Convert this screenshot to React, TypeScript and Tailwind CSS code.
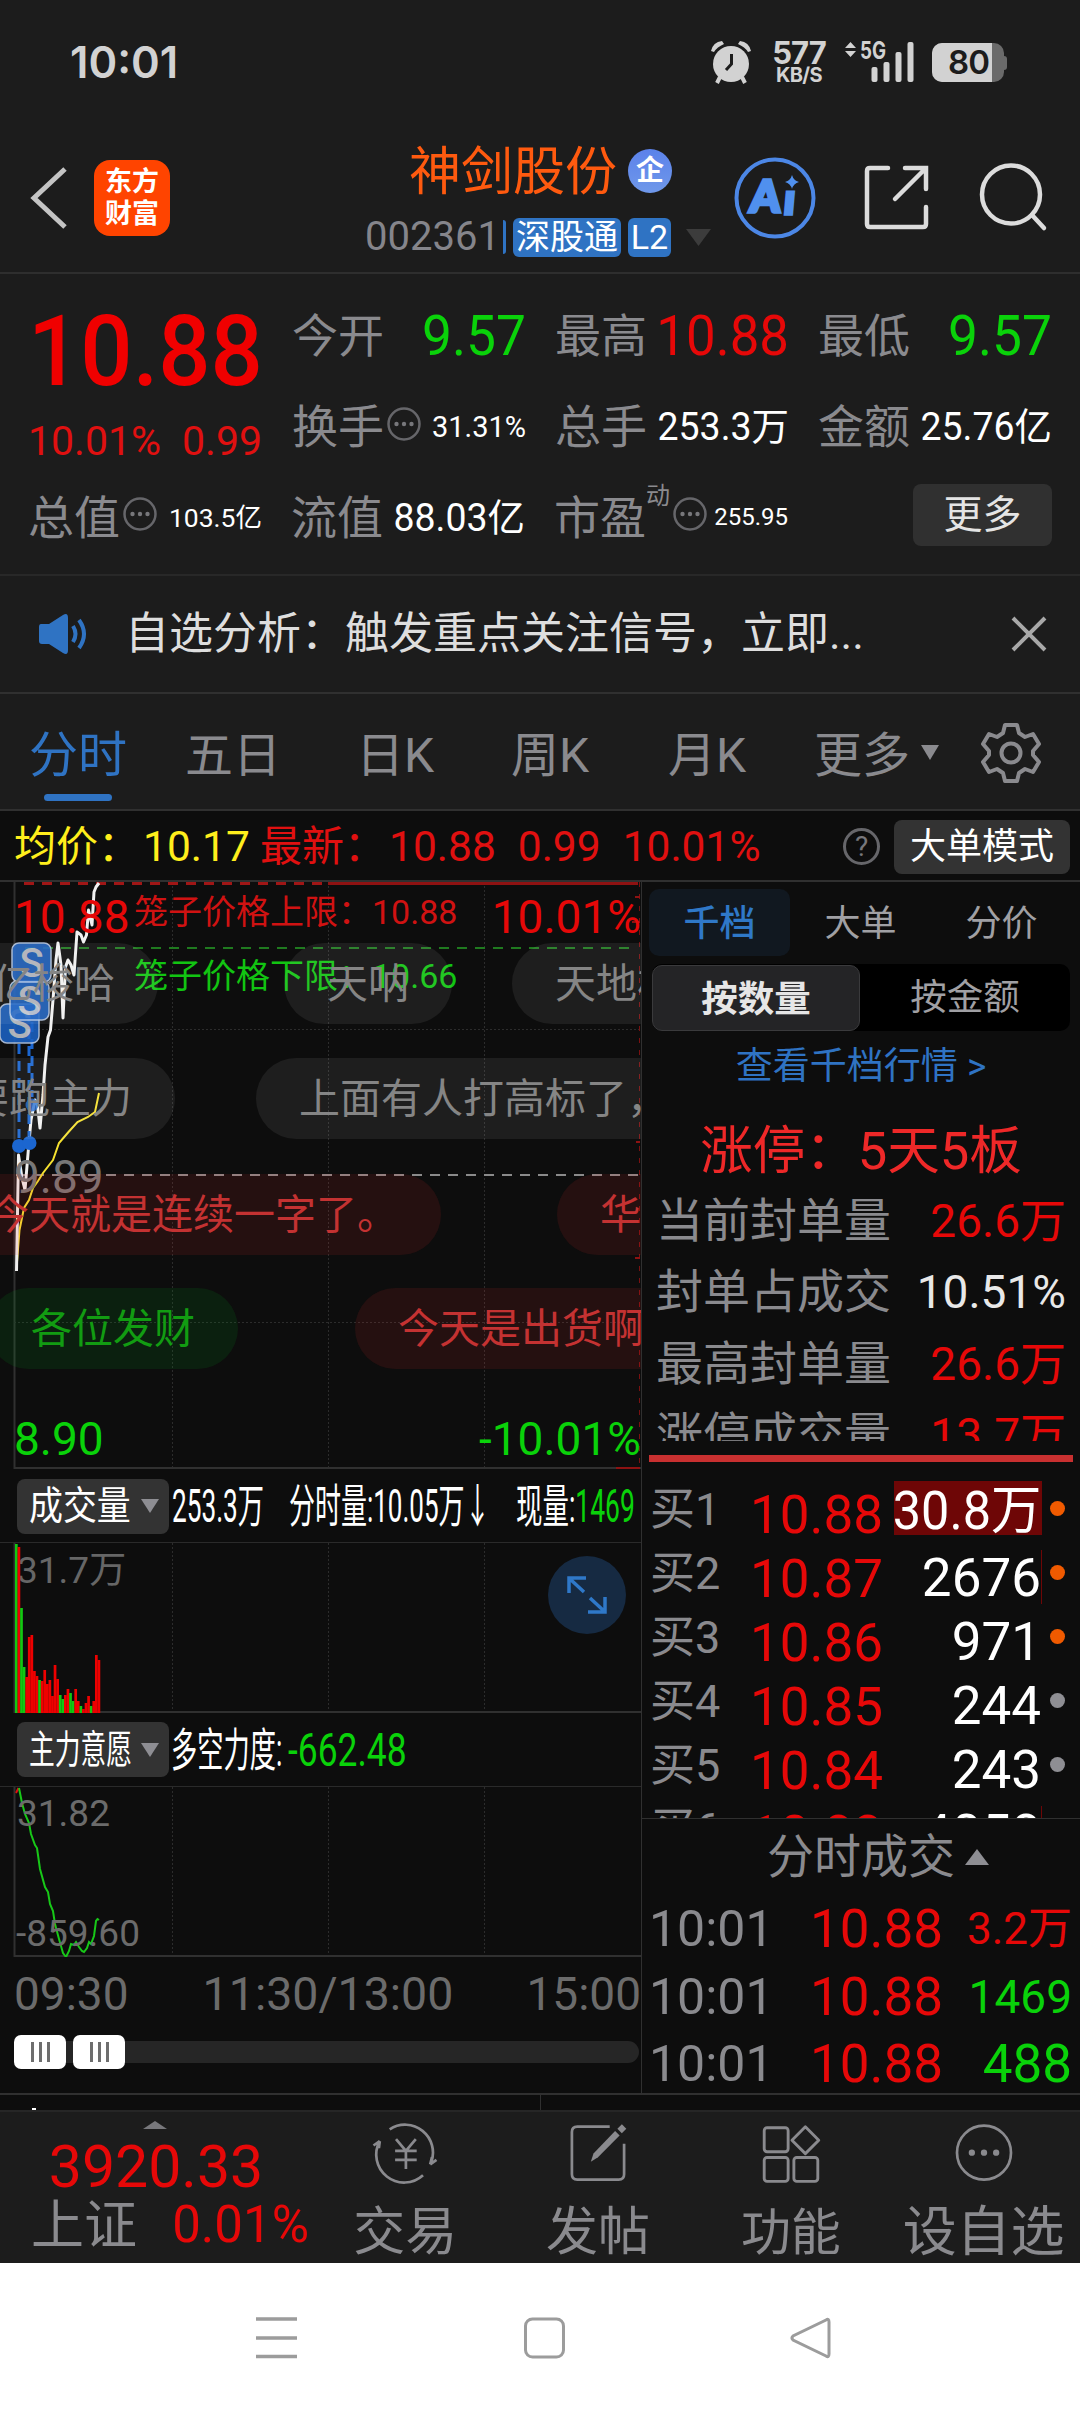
import type { ReactNode } from 'react';
import clsx from 'clsx';

const GRID_X = [172, 328, 484];

// [height, direction] per minute, 'u' = red, 'd' = green
const VOLUME: [number, 'u' | 'd'][] = [
  [169, 'd'], [166, 'u'], [105, 'd'], [46, 'd'], [36, 'u'], [76, 'u'], [78, 'u'], [42, 'u'], [37, 'u'],
  [33, 'd'], [32, 'u'], [43, 'u'], [29, 'u'], [33, 'u'], [17, 'u'], [48, 'u'], [34, 'u'], [18, 'd'],
  [14, 'd'], [18, 'u'], [24, 'u'], [20, 'd'], [12, 'd'], [24, 'u'], [12, 'u'], [7, 'd'], [4, 'u'],
  [10, 'u'], [17, 'u'], [7, 'd'], [12, 'u'], [58, 'u'], [53, 'u'],
];

const PRICE_LINE =
  '16.5,389 18.5,273 22,296 25,308 29,260 31,238 35,218 37.5,223 40,246 43,213 45,183 48,155 50.5,148 53,118 56,78 58,61 61,83 63,136 65.5,85 68,78 71,83 74,93 77,50 81,53 83.5,60 86.5,53 88.5,28 92,43 94,10 96,5 99,1';
const AVG_LINE =
  '17,380 19.5,348 24,326 29,318 33,306 38,299 43,291 53,278 59,261 68.5,250 77.5,240 88,235 95,230 99,211';
const FORCE_LINE =
  '19,1 22,16 25,27 29,36 31,47 35,58 37,61 40,82 45,100 48,105 50,117 53,124 55,137 59,152 61,159 63,166 66,170 69,164 71,157 74,158 76,155 79,160 82,164 84,165 87,161 89,155 91,157 94,149 96,134 97.5,132 99,133';

const BIDS = [
  { label: '买1', price: '10.88', vol: '30.8万', dot: 'bg-[#f05a00]' },
  { label: '买2', price: '10.87', vol: '2676', dot: 'bg-[#f05a00]' },
  { label: '买3', price: '10.86', vol: '971', dot: 'bg-[#f05a00]' },
  { label: '买4', price: '10.85', vol: '244', dot: 'bg-[#8e8e93]' },
  { label: '买5', price: '10.84', vol: '243', dot: 'bg-[#8e8e93]' },
  { label: '买6', price: '10.83', vol: '4058', dot: '' },
];

const SEAL_ROWS = [
  { label: '当前封单量', value: '26.6万', color: 'text-[#e60808]' },
  { label: '封单占成交', value: '10.51%', color: 'text-[#e8e8e8]' },
  { label: '最高封单量', value: '26.6万', color: 'text-[#e60808]' },
  { label: '涨停成交量', value: '13.7万', color: 'text-[#e60808]' },
];

function StatusBar() {
  return (
    <div className="flex h-[123px] items-start pl-[70px]">
      <span className="mt-[38px] w-[641px] font-['Inter'] text-[44px] leading-[48px] font-semibold text-[#d2d2d2]">
        <span className="inline-block origin-left scale-x-[0.99]">10:01</span>
      </span>
      <svg className="mt-[40px] shrink-0" width="40" height="44" viewBox="0 0 40 44" fill="#d2d2d2">
        <circle cx="20" cy="24" r="18" />
        <path d="M0 11 Q2 2 11 1 L13 4 Q6 7 3 12Z M40 11 Q38 2 29 1 L27 4 Q34 7 37 12Z" />
        <path d="M9 37 L6 43 M31 37 L34 43" stroke="#d2d2d2" strokeWidth="4" />
        <path d="M20.500 14 V24 L15 30" stroke="#1c1c1c" strokeWidth="3" fill="none" />
      </svg>
      <div className="mt-[39px] ml-[20px] flex w-[56px] flex-col items-center text-[#d2d2d2]">
        <span className="font-['Inter'] text-[31px] leading-[28px] font-bold tracking-[-1px]">577</span>
        <span className="font-['Inter'] text-[20px] leading-[17px] font-bold tracking-[-0.6px]">KB/S</span>
      </div>
      <svg className="mt-[40px] ml-[17px] shrink-0" width="72" height="44" viewBox="0 0 72 44" fill="#d2d2d2">
        <path d="M1 8 L6.500 2 L12 8Z M1 11 L6.500 17 L12 11Z" />
        <text x="16" y="18.500" fontFamily="Inter" fontWeight="700" fontSize="24" textLength="26" lengthAdjust="spacingAndGlyphs">5G</text>
        <rect x="27.500" y="27" width="6" height="15" rx="2" />
        <rect x="39.500" y="22" width="6" height="20" rx="2" />
        <rect x="51.500" y="12" width="6" height="30" rx="2" />
        <rect x="63.500" y="2" width="6" height="40" rx="2" />
      </svg>
      <div className="mt-[43px] ml-[16px] flex items-center">
        <div className="flex h-[39px] w-[72px] overflow-hidden rounded-[10px] bg-[#6a6a6a]">
          <div className="flex w-[60px] items-center justify-end bg-[#d2d2d2] pr-[3px] font-['Inter'] text-[33px] font-semibold tracking-[-1px] text-[#1c1c1c]">
            80
          </div>
        </div>
        <div className="h-[14px] w-[3px] rounded-r bg-[#6a6a6a]" />
      </div>
    </div>
  );
}

function NavBar() {
  return (
    <div className="flex h-[151px] items-start border-b-2 border-[#2e2e2e]">
      <svg className="mt-[43px] ml-[29px]" width="40" height="64" viewBox="0 0 40 64" fill="none" stroke="#c4c4c4" strokeWidth="5">
        <path d="M36 3 L5 32 L36 61" />
      </svg>
      <div className="mt-[37px] ml-[25px] flex h-[76px] w-[76px] flex-col items-center justify-center rounded-[16px] bg-[#ff4400] text-[27px] leading-[32px] font-bold text-white">
        <span>东方</span>
        <span>财富</span>
      </div>
      <div className="mt-[19px] ml-[195px] w-[347px]">
        <div className="ml-[44px] flex h-[58px] items-center text-[52px] leading-[56px] text-[#ff5a0f]">
          <span className="mt-[4px] w-[219px]">神剑股份</span>
          <span className="flex size-[44px] items-center justify-center rounded-full bg-[linear-gradient(180deg,#5b82ea,#6f98ea)] text-[28px] leading-[28px] font-bold text-white">
            企
          </span>
        </div>
        <div className="mt-[17px] flex h-[40px] items-center">
          <span className="w-[138px] text-[40px] leading-[40px] text-[#85858b]">002361</span>
          <span className="h-[34px] w-[3px] rounded-r-[3px] bg-[#2f73c3]" />
          <span className="ml-[7px] flex h-[39px] w-[108px] items-center justify-center rounded-[6px] bg-[#2f73c3] text-[34px] leading-[34px] text-white">深股通</span>
          <span className="ml-[7px] flex h-[39px] w-[43px] items-center justify-center rounded-[6px] bg-[#2f73c3] text-[34px] leading-[34px] text-white">L2</span>
          <svg className="ml-[15px]" width="25" height="17" viewBox="0 0 25 17" fill="#3c3c3c">
            <path d="M0 0 H25 L12.500 17Z" />
          </svg>
        </div>
      </div>
      <svg className="mt-[34px] ml-[22px]" width="82" height="82" viewBox="0 0 82 82" fill="#5090ee">
        <circle cx="41" cy="41" r="38.500" fill="none" stroke="#4c87e6" strokeWidth="4" />
        <g transform="skewX(-5)" stroke="#5090ee" strokeWidth="3.500" fontFamily="Lato, sans-serif" fontWeight="900">
          <text x="20" y="55" fontSize="44" textLength="30" lengthAdjust="spacingAndGlyphs">A</text>
          <text x="54" y="57" fontSize="42">ı</text>
        </g>
        <path d="M58 18 Q59.500 23.500 65 25 Q59.500 26.500 58 32 Q56.500 26.500 51 25 Q56.500 23.500 58 18Z" />
      </svg>
      <svg className="mt-[40px] ml-[46px]" width="70" height="70" viewBox="0 0 70 70" fill="none" stroke="#dcdcdc" strokeWidth="4.500" strokeLinecap="round">
        <path d="M26 5 H8 Q5 5 5 8 V61 Q5 64 8 64 H61 Q64 64 64 61 V44" />
        <path d="M43 5 H64 V26 M63 6 L33 36" />
      </svg>
      <svg className="mt-[39px] ml-[46px]" width="72" height="72" viewBox="0 0 72 72" fill="none" stroke="#dcdcdc" strokeWidth="4.500" strokeLinecap="round">
        <circle cx="33" cy="32.500" r="29" />
        <path d="M54 53 L66 66" />
      </svg>
    </div>
  );
}

function MoreDots({ className }: { className?: string }) {
  return (
    <svg className={clsx('shrink-0', className)} width="34" height="34" viewBox="0 0 34 34">
      <circle cx="17" cy="17" r="15.500" fill="none" stroke="#66666a" strokeWidth="2.500" />
      <circle cx="9.500" cy="17" r="2.200" fill="#77777b" />
      <circle cx="17" cy="17" r="2.200" fill="#77777b" />
      <circle cx="24.500" cy="17" r="2.200" fill="#77777b" />
    </svg>
  );
}

function Stat({ label, icon, children, className }: { label: string; icon?: ReactNode; children: ReactNode; className?: string }) {
  return (
    <div className="flex h-[60px] w-[234px] items-center">
      <span className="shrink-0 text-[46px] leading-[60px] text-[#8a8a8e]">{label}</span>
      {icon}
      <span className={clsx('flex flex-1 origin-right justify-end leading-[60px] whitespace-nowrap', className)}>{children}</span>
    </div>
  );
}

function QuotePanel() {
  return (
    <div className="h-[302px] border-b-2 border-[#282828] pt-[32px] pl-[28px]">
      <div className="flex h-[152px] gap-[30px]">
        <div className="flex w-[234px] flex-col">
          <span className="mt-[-5px] h-[100px] origin-left scale-x-[0.93] text-[99px] leading-[100px] font-medium text-[#f00000]">10.88</span>
          <div className="mt-[15px] flex h-[52px] items-center justify-between text-[#e01010]">
            <span className="text-[41px]">10.01%</span>
            <span className="text-[41px]">0.99</span>
          </div>
        </div>
        <div className="flex flex-col gap-[31px]">
          <div className="flex gap-[29px]">
            <Stat label="今开" className="scale-x-[0.97] text-[55px] text-[#0ad20a]">9.57</Stat>
            <Stat label="最高" className="scale-x-[0.96] text-[55px] text-[#e60808]">10.88</Stat>
            <Stat label="最低" className="scale-x-[0.97] text-[55px] text-[#0ad20a]">9.57</Stat>
          </div>
          <div className="flex gap-[29px]">
            <Stat label="换手" icon={<MoreDots className="mb-[7px] ml-[3px]" />} className="text-[29px] text-white">31.31%</Stat>
            <Stat label="总手" className="scale-x-[0.985] text-[38px] text-white">253.3万</Stat>
            <Stat label="金额" className="scale-x-[0.985] text-[38px] text-white">25.76亿</Stat>
          </div>
        </div>
      </div>
      <div className="mt-[30px] flex gap-[29px]">
        <Stat label="总值" icon={<MoreDots className="mb-[9px] ml-[3px]" />} className="text-[26.500px] text-white">103.5亿</Stat>
        <Stat label="流值" className="scale-x-[0.985] text-[38px] text-white">88.03亿</Stat>
        <Stat
          label="市盈"
          icon={
            <>
              <span className="mb-[44px] text-[24px] leading-[24px] text-[#8a8a8e]">动</span>
              <MoreDots className="mb-[9px] ml-[3px]" />
            </>
          }
          className="mb-[2px] text-[24px] text-white"
        >
          255.95
        </Stat>
        <div className="flex w-[235px] justify-end">
          <span className="mt-[-4px] flex h-[62px] w-[139px] items-center justify-center rounded-[8px] bg-[#303030] text-[39px] text-[#e4e4e4]">更多</span>
        </div>
      </div>
    </div>
  );
}

function NoticeBar() {
  return (
    <div className="flex h-[118px] items-center border-b-2 border-[#303030] pl-[38px]">
      <svg width="52" height="44" viewBox="0 0 52 44">
        <path d="M3 12 Q1 12 1 15 V29 Q1 32 4 32 H11 L25 41 Q30 44 30 38 V6 Q30 0 25 3 L11 12Z" fill="#2f73c3" />
        <path d="M35 14 Q40 22 35 30 M41 8 Q51 22 41 36" fill="none" stroke="#2f73c3" strokeWidth="4" />
      </svg>
      <span className="ml-[35px] text-[44px] leading-[60px] text-[#dedede]">自选分析：触发重点关注信号，立即...</span>
      <svg className="mr-[33px] ml-auto" width="36" height="36" viewBox="0 0 36 36" stroke="#a8a8a8" strokeWidth="4">
        <path d="M2 2 L34 34 M34 2 L2 34" />
      </svg>
    </div>
  );
}

function PeriodTabs() {
  return (
    <div className="flex h-[117px] items-start border-b-2 border-[#303030] pl-[29px] text-[48px] leading-[60px] text-[#8a8a8e]">
      <div className="mt-[32px] flex w-[98px] flex-col items-center text-[#2f73c3]">
        <span className="text-[49px]">分时</span>
        <span className="mt-[8px] h-[7px] w-[68px] rounded-full bg-[#2f73c3]" />
      </div>
      <span className="mt-[32px] ml-[58px] w-[96px]">五日</span>
      <span className="mt-[32px] ml-[75px] w-[80px]">日K</span>
      <span className="mt-[32px] ml-[75px] w-[80px]">周K</span>
      <span className="mt-[32px] ml-[77px] w-[80px]">月K</span>
      <span className="mt-[32px] ml-[66px]">更多</span>
      <svg className="mt-[51px] ml-[11px]" width="18" height="15" viewBox="0 0 18 15" fill="#8a8a8e">
        <path d="M0 0 H18 L9 15Z" />
      </svg>
      <svg className="mt-[28px] ml-[41px]" width="62" height="62" viewBox="0 0 62 62" fill="none" stroke="#8a8a8e" strokeWidth="4">
        <path d="M25 3 H37 L39 11 L45 15 L53 12 L59 22 L53 29 V33 L59 40 L53 50 L45 47 L39 51 L37 59 H25 L23 51 L17 47 L9 50 L3 40 L9 33 V29 L3 22 L9 12 L17 15 L23 11Z" strokeLinejoin="round" />
        <circle cx="31" cy="31" r="9.500" />
      </svg>
    </div>
  );
}

function PriceSummary() {
  return (
    <div className="flex h-[71px] items-center border-b-2 border-[#303030] bg-[#0d0d0d] pt-[2px] pl-[14px] text-[42px] leading-[60px] whitespace-pre">
      <span className="w-[246px] text-[#ffee1c]">均价：<span className="ml-[3px] text-[42.500px]">10.17</span></span>
      <span className="w-[583px] text-[#e01010]">最新：<span className="ml-[3px] text-[42.500px]">10.88</span><span className="ml-[22px] text-[42.500px]">0.99</span><span className="ml-[22px] text-[42.500px]">10.01%</span></span>
      <span className="flex size-[37px] items-center justify-center rounded-full border-[3px] border-[#66666a] text-[28px] leading-[28px] text-[#77777b]">?</span>
      <span className="ml-[14px] flex h-[54px] w-[176px] items-center justify-center rounded-[8px] bg-[#333333] text-[36px] text-white">大单模式</span>
    </div>
  );
}

// Comment bubbles drifting over the price chart
function Bubble({ tone, className, children }: { tone: 'gray' | 'red' | 'green'; className: string; children: string }) {
  return (
    <span
      className={clsx(
        'absolute flex h-[81px] items-center rounded-full px-[43px] text-[41px] leading-[60px] whitespace-nowrap',
        tone === 'gray' && 'bg-white/[0.07] text-[#858585]',
        tone === 'red' && 'bg-[#f03030]/[0.11] text-[#c43232]',
        tone === 'green' && 'bg-[#00b020]/[0.12] text-[#129c12]',
        className,
      )}
    >
      {children}
    </span>
  );
}

function SellMark({ x, y }: { x: number; y: number }) {
  return (
    <g opacity="0.88">
      <rect x={x} y={y} width="39" height="39" rx="7" fill="#1b62c4" stroke="#b8cbe8" strokeWidth="1.500" />
      <text x={x + 19.500} y={y + 34} textAnchor="middle" fontFamily="Roboto" fontWeight="500" fontSize="40" fill="#c4c8d0">S</text>
    </g>
  );
}

function Grid({ h }: { h: number }) {
  return (
    <>
      {GRID_X.map(x => (
        <line key={x} x1={x + 0.5} x2={x + 0.5} y1="0" y2={h} stroke="#2c2c2c" strokeDasharray="2 2" />
      ))}
      <path d={`M14.500 0 V${h - 1} H641`} fill="none" stroke="#303030" strokeWidth="2" />
    </>
  );
}

function PriceChart() {
  return (
    <div className="relative h-[587px] overflow-hidden leading-[60px]">
      <svg className="block" width="641" height="587" viewBox="0 0 641 587">
        <Grid h={587} />
        <path d="M14 147.500 H641 M14 440.500 H641" stroke="#2c2c2c" strokeDasharray="2 2" />
        <path d="M24 1.500 H328" stroke="#a01616" strokeWidth="3" strokeDasharray="10 8" />
        <path d="M328 1.500 H638" stroke="#8e1212" strokeWidth="3" />
        <path d="M25 66 H630" stroke="#1f7a1f" strokeWidth="2" strokeDasharray="10 8" />
        <path d="M16 293 H641" stroke="#8a8a8a" strokeWidth="2" strokeDasharray="10 8" />
        <path d="M639.500 0 V586" stroke="#7a1010" strokeDasharray="5 7" />
        <path d="M635 15 H640 M632 40 H640 M636 260 H640 M635 376 H640 M616 586 H640" stroke="#8e1212" strokeWidth="2" />
        <polyline points={AVG_LINE} fill="none" stroke="#f5e130" strokeWidth="2" />
        <polyline points={PRICE_LINE} fill="none" stroke="#f0f0f0" strokeWidth="3" strokeLinejoin="round" />
        <path d="M19 162 V256 M29 130 V254 M32 140 V215" stroke="#1b66d0" strokeWidth="3" strokeDasharray="10 7" />
        <circle cx="32" cy="223" r="6.500" fill="#1b66d0" opacity="0.8" />
        <circle cx="19" cy="264" r="7" fill="#1b66d0" />
        <circle cx="29.500" cy="261" r="7" fill="#1b66d0" />
        <SellMark x={0} y={122} />
        <SellMark x={10} y={99} />
        <SellMark x={12} y={61} />
      </svg>
      <span className="absolute top-[5px] left-[14px] text-[46px] text-[#e60808]">10.88</span>
      <span className="absolute top-[5px] right-0 text-[46px] text-[#e60808]">10.01%</span>
      <span className="absolute top-[265px] left-[14px] text-[46px] text-[#777777]">9.89</span>
      <span className="absolute top-[527px] left-[14px] text-[46px] text-[#0ad20a]">8.90</span>
      <span className="absolute top-[527px] right-0 text-[46px] text-[#0ad20a]">-10.01%</span>
      <span className="absolute top-0 left-[134px] text-[34px] whitespace-nowrap text-[#d01212]">笼子价格上限：10.88</span>
      <span className="absolute top-[64px] left-[134px] text-[34px] whitespace-nowrap text-[#12c412]">笼子价格下限：10.66</span>
      <Bubble tone="gray" className="top-[61px] right-[483px]">亿梭哈</Bubble>
      <Bubble tone="gray" className="top-[61px] left-[284px]">天呐</Bubble>
      <Bubble tone="gray" className="top-[61px] left-[512px]">天地板</Bubble>
      <Bubble tone="gray" className="top-[176px] right-[466px]">要跑主力</Bubble>
      <Bubble tone="gray" className="top-[176px] left-[256px]">上面有人打高标了，</Bubble>
      <Bubble tone="red" className="top-[292px] right-[200px]">今天就是连续一字了。</Bubble>
      <Bubble tone="red" className="top-[292px] left-[557px]">华</Bubble>
      <Bubble tone="green" className="top-[406px] left-[-12px]">各位发财</Bubble>
      <Bubble tone="red" className="top-[406px] left-[355px]">今天是出货啊</Bubble>
    </div>
  );
}

function IndicatorSelect({ children, squeeze }: { children: string; squeeze: string }) {
  return (
    <div className="ml-[17px] flex h-[55px] w-[152px] shrink-0 items-center rounded-[8px] bg-[#333333] pl-[12px]">
      <span className="w-[112px] text-white">
        <span className={clsx('block origin-left text-[39px] whitespace-nowrap', squeeze)}>{children}</span>
      </span>
      <svg width="18" height="14" viewBox="0 0 18 14" fill="#8e8e93">
        <path d="M0 0 H18 L9 14Z" />
      </svg>
    </div>
  );
}

function ChartColumn() {
  return (
    <div className="w-[641px] overflow-hidden">
      <PriceChart />
      <div className="flex h-[73px] items-center pt-px text-[46px] leading-[60px] whitespace-nowrap text-white">
        <IndicatorSelect squeeze="scale-x-[0.87]">成交量</IndicatorSelect>
        <div className="ml-[3px] w-[117px]"><span className="block origin-left scale-x-[0.57]">253.3万</span></div>
        <div className="w-[227px]"><span className="block origin-left scale-x-[0.565]">分时量:10.05万↓</span></div>
        <div className="w-[124px]"><span className="block origin-left scale-x-[0.575]">现量:<span className="text-[#0ad20a]">1469</span></span></div>
      </div>
      <div className="relative h-[171px] border-t border-[#2a2a2a]">
        <svg className="block" width="641" height="170" viewBox="0 0 641 170">
          <Grid h={170} />
        </svg>
        <span className="absolute top-0 left-[17px] text-[37px] leading-[56px] text-[#666666]">31.7万</span>
        <svg className="absolute top-0 left-0" width="140" height="170" viewBox="0 0 140 170">
          {VOLUME.map(([h, dir], i) => (
            <rect key={i} x={15 + i * 2.58} y={170 - h} width="2.700" height={h} fill={dir === 'u' ? '#ee0000' : '#12c812'} />
          ))}
        </svg>
        <span className="absolute top-[13px] left-[548px] flex size-[78px] items-center justify-center rounded-full bg-[#162a42]">
          <svg width="40" height="40" viewBox="0 0 40 40" fill="none" stroke="#2f78c8" strokeWidth="3.500">
            <path d="M2 18 V3 H19 M3 4 L17 17 M38 22 V37 H21 M37 36 L23 23" />
          </svg>
        </span>
      </div>
      <div className="flex h-[73px] items-center text-[46px] leading-[60px] whitespace-nowrap text-white">
        <IndicatorSelect squeeze="scale-x-[0.66]">主力意愿</IndicatorSelect>
        <div className="ml-[2px] w-[117px]"><span className="block origin-left scale-x-[0.57]">多空力度:</span></div>
        <span className="block origin-left scale-x-[0.77] text-[#0ad20a]">-662.48</span>
      </div>
      <div className="relative h-[170px] border-t border-[#2a2a2a]">
        <svg className="block" width="641" height="170" viewBox="0 0 641 170">
          <Grid h={170} />
          <path d="M16 6 L18.500 1" stroke="#e01010" strokeWidth="2" />
          <polyline points={FORCE_LINE} fill="none" stroke="#18c818" strokeWidth="2" />
        </svg>
        <span className="absolute top-px left-[17px] text-[37px] leading-[52px] text-[#6b6b6b]">31.82</span>
        <span className="absolute top-[121px] left-[16px] text-[37px] leading-[52px] text-[#6b6b6b]">-859.60</span>
      </div>
      <div className="flex h-[79px] items-center justify-between pl-[14px] text-[46px] leading-[76px] text-[#6b6b6b]">
        <span className="mb-[3px]">09:30</span>
        <span className="mb-[3px] ml-px text-[46.500px]">11:30/13:00</span>
        <span className="mb-[3px]">15:00</span>
      </div>
      <div className="flex h-[34px] items-center pl-[14px]">
        <SliderHandle />
        <span className="h-[22px] w-[7px] bg-[#262626]" />
        <SliderHandle />
        <span className="h-[22px] w-[514px] rounded-r-full bg-[#262626]" />
      </div>
    </div>
  );
}

function SliderHandle() {
  return (
    <span className="flex h-[34px] w-[52px] items-center justify-center gap-[5px] rounded-[7px] bg-white">
      <i className="h-[20px] w-[3px] bg-[#6e6e6e]" />
      <i className="h-[20px] w-[3px] bg-[#6e6e6e]" />
      <i className="h-[20px] w-[3px] bg-[#6e6e6e]" />
    </span>
  );
}

function OrderBook() {
  return (
    <div className="w-[439px] overflow-hidden border-l border-[#303030] pt-[7px]">
      <div className="ml-[7px] flex h-[67px] text-[36px] leading-[70px] text-[#a0a0a4]">
        <span className="w-[141px] rounded-[10px] bg-[#111820] text-center font-medium text-[#2f78c8]">千档</span>
        <span className="w-[141px] text-center">大单</span>
        <span className="w-[141px] text-center">分价</span>
      </div>
      <div className="mt-[8px] ml-[10px] flex h-[67px] w-[418px] items-center rounded-[10px] bg-black text-[36.500px] leading-[67px]">
        <span className="h-[66px] w-[208px] rounded-[10px] border border-[#3a3a3c] bg-[#242426] text-center font-bold text-[#e6e6e6]">按数量</span>
        <span className="flex-1 text-center text-[#a0a0a4]">按金额</span>
      </div>
      <div className="mt-[6px] h-[60px] text-center text-[37px] leading-[60px] text-[#2f73c3]">查看千档行情 &gt;</div>
      <div className="mt-[22px] h-[64px] text-center text-[52.500px] leading-[64px] text-[#ee2828]">涨停：5天5板</div>
      <div className="mt-[2px] h-[256px] overflow-hidden">
        {SEAL_ROWS.map(row => (
          <div key={row.label} className="flex h-[71.5px] items-center justify-between pr-[14px] pl-[14px] whitespace-nowrap">
            <span className="text-[47px] leading-[64px] text-[#8a8a8e]">{row.label}</span>
            <span className={clsx('text-[46px] leading-[64px]', row.color)}>{row.value}</span>
          </div>
        ))}
      </div>
      <div className="mt-[14px] ml-[7px] h-[7px] w-[424px] bg-[#c83030]" />
      <div className="h-[357px] overflow-hidden border-b border-[#303030] pt-[17px]">
        {BIDS.map((b, i) => (
          <div key={b.label} className="flex h-[64px] items-center pl-[8px] whitespace-nowrap">
            <span className="mb-[2px] w-[100px] text-[45px] leading-[54px] text-[#8a8a8e]">{b.label}</span>
            <span className="mt-[8px] w-[144px] text-[53px] leading-[54px] text-[#e60808]">{b.price}</span>
            <span
              className={clsx(
                'flex h-[54px] w-[148px] items-center justify-end border-r text-[53px] leading-[54px] text-white',
                i === 0 && 'mb-[6px] border-[#6e0606] bg-[#6e0606]',
                i > 0 && 'mt-[4px]',
                (i === 1 || i === 5) && 'border-[#6e0606]',
                i > 1 && i < 5 && 'border-transparent',
              )}
            >
              <span className={clsx('origin-right', i === 0 ? 'mt-[6px] scale-x-[0.95]' : 'mt-[2px]')}>{b.vol}</span>
            </span>
            <span className={clsx('mb-[6px] ml-[8px] size-[15px] rounded-full', b.dot)} />
          </div>
        ))}
      </div>
      <div className="flex h-[76px] items-center pl-[125px] text-[47px] leading-[60px] text-[#8a8a8e]">
        分时成交
        <svg className="ml-[10px]" width="24" height="16" viewBox="0 0 24 16" fill="#8e8e93">
          <path d="M12 0 L24 16 H0Z" />
        </svg>
      </div>
      <Trade size="text-[44px] text-[#e60808]">3.2万</Trade>
      <Trade size="text-[46px] text-[#0ad20a]">1469</Trade>
      <Trade size="text-[53px] text-[#0ad20a]">488</Trade>
    </div>
  );
}

function Trade({ size, children }: { size: string; children: string }) {
  return (
    <div className="flex h-[67.5px] items-center pt-px pr-[8px] pl-[7px] leading-[60px]">
      <span className="w-[161px] text-[50px] text-[#8a8a8e]">10:01</span>
      <span className="text-[53px] text-[#e60808]">10.88</span>
      <span className={clsx('ml-auto', size)}>{children}</span>
    </div>
  );
}

function ToolItem({ label, children, className }: { label: string; children: ReactNode; className?: string }) {
  return (
    <div className="flex w-[193px] flex-col items-center pt-[11px]">
      <svg width="74" height="70" viewBox="0 0 74 70" fill="none" stroke="#8a8a8e" strokeWidth="3">{children}</svg>
      <span className={clsx('whitespace-nowrap leading-[60px] text-[#8a8a8e]', className)}>{label}</span>
    </div>
  );
}

function BottomBar() {
  return (
    <div className="flex h-[153px] overflow-hidden border-t-2 border-[#262626]">
      <div className="flex w-[309px] flex-col items-center">
        <svg className="mt-[9px] h-[8px] w-[24px]" viewBox="0 0 24 8" fill="#77777b">
          <path d="M12 0 L24 8 H0Z" />
        </svg>
        <span className="mt-[8px] ml-[3px] h-[60px] text-[59px] leading-[60px] text-[#e60808]">3920.33</span>
        <div className="flex w-full items-center pl-[31px] leading-[56px]">
          <span className="w-[142px] text-[53px] text-[#8a8a8e]">上证</span>
          <span className="mb-[2px] text-[51px] text-[#e60808]">0.01%</span>
        </div>
      </div>
      <ToolItem label="交易" className="mt-[17px] text-[52px]">
        <path d="M20 7 A31 31 0 0 1 66 44 M65 46 L72 41 M65 46 L67 38" />
        <path d="M57 58 A31 31 0 0 1 9 20 M9 20 L2 25 M9 20 L8 28" />
        <path d="M27 18 L38 31 L49 18 M38 31 V51 M26 31 H50 M26 41 H50" />
      </ToolItem>
      <ToolItem label="发帖" className="mt-[17px] text-[52px]">
        <path d="M50 4 H14 Q8 4 8 10 V57 Q8 63 14 63 H60 Q66 63 66 57 V23" />
        <path d="M29 43 L32 34 L56 9 L61 14 L37 38Z" fill="#8a8a8e" stroke="none" />
        <path d="M61 9 L66 4" strokeWidth="7" />
      </ToolItem>
      <ToolItem label="功能" className="mt-[13px] text-[50px]">
        <rect x="9" y="5" width="25" height="25" rx="3" />
        <rect x="9" y="36" width="25" height="25" rx="3" />
        <rect x="40" y="36" width="25" height="25" rx="3" />
        <path d="M52 4 L66 18 L52 32 L38 18Z" strokeLinejoin="round" />
      </ToolItem>
      <ToolItem label="设自选" className="mt-[17px] text-[54px]">
        <circle cx="37" cy="33" r="30" />
        <g fill="#8a8a8e" stroke="none">
          <circle cx="23.500" cy="33" r="3.500" />
          <circle cx="37" cy="33" r="3.500" />
          <circle cx="50.500" cy="33" r="3.500" />
        </g>
      </ToolItem>
    </div>
  );
}

function SystemNav() {
  return (
    <div className="flex h-[149px] items-center bg-white pl-[255px]">
      <svg width="43" height="44" viewBox="0 0 43 44" stroke="#9c9c9c" strokeWidth="3.500">
        <path d="M1 3 H42 M1 22 H42 M1 40.500 H42" />
      </svg>
      <svg className="ml-[225px]" width="43" height="44" viewBox="0 0 43 44" fill="none" stroke="#9c9c9c" strokeWidth="3">
        <rect x="2.500" y="3" width="38" height="38" rx="7" />
      </svg>
      <svg className="ml-[224px]" width="42" height="44" viewBox="0 0 42 44" fill="none" stroke="#9c9c9c" strokeWidth="3">
        <path d="M36 4 Q39 2 39 6 V38 Q39 42 36 40 L3 24 Q1 22 3 20Z" />
      </svg>
    </div>
  );
}

export default function App() {
  return (
    <div className="h-[2412px] w-[1080px] overflow-hidden bg-[#1c1c1c] font-[Roboto,'Noto_Sans_CJK_SC',sans-serif]">
      <StatusBar />
      <NavBar />
      <QuotePanel />
      <NoticeBar />
      <PeriodTabs />
      <div className="bg-[#0d0d0d]">
        <PriceSummary />
        <div className="flex h-[1213px] border-b-2 border-[#303030]">
          <ChartColumn />
          <OrderBook />
        </div>
        <div className="flex h-[15px] items-end">
          <span className="ml-[32px] h-[2px] w-[4px] bg-white" />
          <span className="ml-[504px] h-full w-px bg-[#303030]" />
        </div>
      </div>
      <BottomBar />
      <SystemNav />
    </div>
  );
}
